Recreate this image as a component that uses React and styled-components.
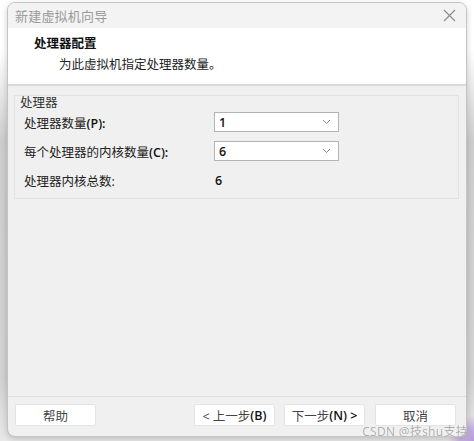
import React from "react";
import styled, { createGlobalStyle } from "styled-components";

const Global = createGlobalStyle`
  html, body { margin: 0; padding: 0; }
  body {
    width: 474px;
    height: 441px;
    overflow: hidden;
    font-family: "Open Sans", "Noto Sans CJK SC", sans-serif;
    background:
      radial-gradient(circle at 474px 441px, #b79ad6 0, #c9b3e2 14px, rgba(230,220,240,0) 26px),
      linear-gradient(to bottom, #ffffff 0, #ffffff 50px, #cdcdcd 140px, #d2d2d2 380px, #e9e9e9 441px);
  }
`;

const Page = styled.div`
  width: 474px;
  height: 441px;
  padding: 2px 0 0 7px;
  box-sizing: border-box;
  position: relative;
`;

const Window = styled.div`
  width: 460px;
  height: 435px;
  box-sizing: border-box;
  border: 1px solid #c4c4c4;
  border-radius: 8px;
  overflow: hidden;
  display: flex;
  flex-direction: column;
  background: #f0f0f0;
  box-shadow: 0 2px 6px rgba(0, 0, 0, 0.18);
`;

const TitleBar = styled.div`
  height: 25px;
  flex: none;
  display: flex;
  align-items: center;
  justify-content: space-between;
  padding: 0 9px 0 7px;
  background: #f3f3f3;
`;

const Title = styled.span`
  font-size: 13px;
  color: #9a9a9a;
  letter-spacing: 0.2px;
`;

const Close = styled.svg`
  width: 13px;
  height: 13px;
  margin-right: 1px;
`;

const Header = styled.div`
  height: 58px;
  flex: none;
  background: #ffffff;
  padding: 8px 0 0 26px;
  box-sizing: border-box;
  border-bottom: 2px solid #dadada;
`;

const HeaderTitle = styled.div`
  font-size: 12.5px;
  font-weight: 700;
  color: #111;
  line-height: 16px;
`;

const HeaderSub = styled.div`
  font-size: 12.5px;
  color: #222;
  line-height: 16px;
  margin: 5px 0 0 25px;
`;

const Body = styled.div`
  flex: 1;
  padding: 9px 7px 0 6px;
`;

const Group = styled.fieldset`
  margin: 0;
  height: 104px;
  box-sizing: border-box;
  border: 1px solid #e2e2e2;
  padding: 0 0 0 9px;
  display: flex;
  flex-direction: column;
`;

const GroupLabel = styled.div`
  font-size: 12.5px;
  color: #333;
  line-height: 14px;
  margin: 0 0 2px -4px;
`;

const Row = styled.div`
  display: grid;
  grid-template-columns: 190px 125px;
  align-items: center;
  height: 20px;
  margin-bottom: ${(p) => p.$gap}px;
`;

const Label = styled.span`
  font-size: 12.5px;
  color: #222;
`;

const Latin = styled.span`
  font-weight: 600;
  color: #111;
`;

const Select = styled.div`
  height: 20px;
  box-sizing: border-box;
  border: 1px solid #b4b4b4;
  background: #fff;
  display: flex;
  align-items: center;
  justify-content: space-between;
  padding: 0 7px 0 4px;
  font-size: 12.5px;
  font-weight: 600;
  color: #111;
`;

const Chevron = styled.svg`
  width: 9px;
  height: 6px;
`;

const Value = styled.span`
  font-size: 12.5px;
  font-weight: 600;
  color: #111;
  padding-left: 1px;
`;

const Footer = styled.div`
  height: 40px;
  flex: none;
  border-top: 1px solid #dedede;
  display: flex;
  align-items: flex-start;
  padding: 7px 9px 0 7px;
  box-sizing: border-box;
  gap: 9px;
`;

const Button = styled.div`
  width: 81px;
  height: 22px;
  box-sizing: border-box;
  background: #fff;
  border: 1px solid #e4e4e4;
  border-radius: 2px;
  display: flex;
  align-items: center;
  justify-content: center;
  font-size: 12.5px;
  color: #444;
  margin-left: ${(p) => p.$push || 0}px;
`;

const Watermark = styled.div`
  position: absolute;
  right: 6px;
  bottom: 2px;
  font-size: 12px;
  line-height: 14px;
  color: rgba(150, 150, 150, 0.8);
  text-shadow: 0 0 1px #fff;
  letter-spacing: 0.3px;
`;

const Chev = () => (
  <Chevron viewBox="0 0 9 6">
    <path d="M1 1 L4.5 4.5 L8 1" fill="none" stroke="#8a8a8a" strokeWidth="1" />
  </Chevron>
);

export default function App() {
  return (
    <>
      <Global />
      <Page>
        <Window>
          <TitleBar>
            <Title>新建虚拟机向导</Title>
            <Close viewBox="0 0 13 13">
              <path d="M1 1 L12 12 M12 1 L1 12" stroke="#8c8c8c" strokeWidth="1.1" />
            </Close>
          </TitleBar>
          <Header>
            <HeaderTitle>处理器配置</HeaderTitle>
            <HeaderSub>为此虚拟机指定处理器数量。</HeaderSub>
          </Header>
          <Body>
            <Group>
              <GroupLabel>处理器</GroupLabel>
              <Row $gap={9}>
                <Label>
                  处理器数量<Latin>(P):</Latin>
                </Label>
                <Select>
                  1<Chev />
                </Select>
              </Row>
              <Row $gap={9}>
                <Label>
                  每个处理器的内核数量<Latin>(C):</Latin>
                </Label>
                <Select>
                  6<Chev />
                </Select>
              </Row>
              <Row $gap={0}>
                <Label>处理器内核总数:</Label>
                <Value>6</Value>
              </Row>
            </Group>
          </Body>
          <Footer>
            <Button>帮助</Button>
            <Button $push={89}>
              &lt; 上一步<Latin>(B)</Latin>
            </Button>
            <Button>
              下一步<Latin>(N) &gt;</Latin>
            </Button>
            <Button $push={1}>取消</Button>
          </Footer>
        </Window>
        <Watermark>CSDN @技shu支持</Watermark>
      </Page>
    </>
  );
}
